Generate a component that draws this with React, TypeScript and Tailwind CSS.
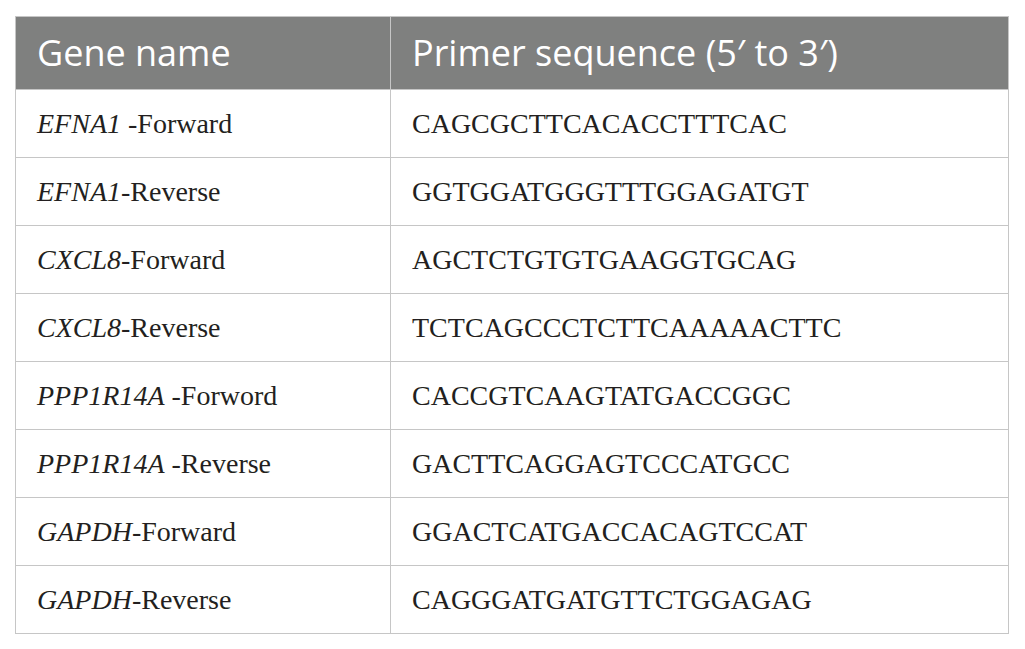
const rows: [string, string, string][] = [
  ["EFNA1", " -Forward", "CAGCGCTTCACACCTTTCAC"],
  ["EFNA1", "-Reverse", "GGTGGATGGGTTTGGAGATGT"],
  ["CXCL8", "-Forward", "AGCTCTGTGTGAAGGTGCAG"],
  ["CXCL8", "-Reverse", "TCTCAGCCCTCTTCAAAAACTTC"],
  ["PPP1R14A", " -Forword", "CACCGTCAAGTATGACCGGC"],
  ["PPP1R14A", " -Reverse", "GACTTCAGGAGTCCCATGCC"],
  ["GAPDH", "-Forward", "GGACTCATGACCACAGTCCAT"],
  ["GAPDH", "-Reverse", "CAGGGATGATGTTCTGGAGAG"],
];

export default function App() {
  return (
    <div className="w-[1025px] h-[649px] bg-white pt-[16px] pl-[15px]">
      <table className="border-collapse w-[994px] table-fixed">
        <colgroup>
          <col className="w-[375px]" />
          <col />
        </colgroup>
        <thead>
          <tr className="bg-[#7f807f] h-[73px] text-white text-[36px] font-['Open_Sans',sans-serif]">
            <th className="text-left font-normal pl-[21px] border border-[#c6c6c6] leading-none">Gene name</th>
            <th className="text-left font-normal pl-[21px] border border-[#c6c6c6] leading-none">
              Primer sequence (5′ to 3′)
            </th>
          </tr>
        </thead>
        <tbody className="font-['Liberation_Serif',serif] text-[28px] text-[#231f20]">
          {rows.map(([gene, dir, seq]) => (
            <tr key={gene + dir} className="h-[68px]">
              <td className="pl-[21px] border border-[#c6c6c6] leading-none">
                <i>{gene}</i>
                {dir}
              </td>
              <td className="pl-[21px] border border-[#c6c6c6] leading-none">{seq}</td>
            </tr>
          ))}
        </tbody>
      </table>
    </div>
  );
}
